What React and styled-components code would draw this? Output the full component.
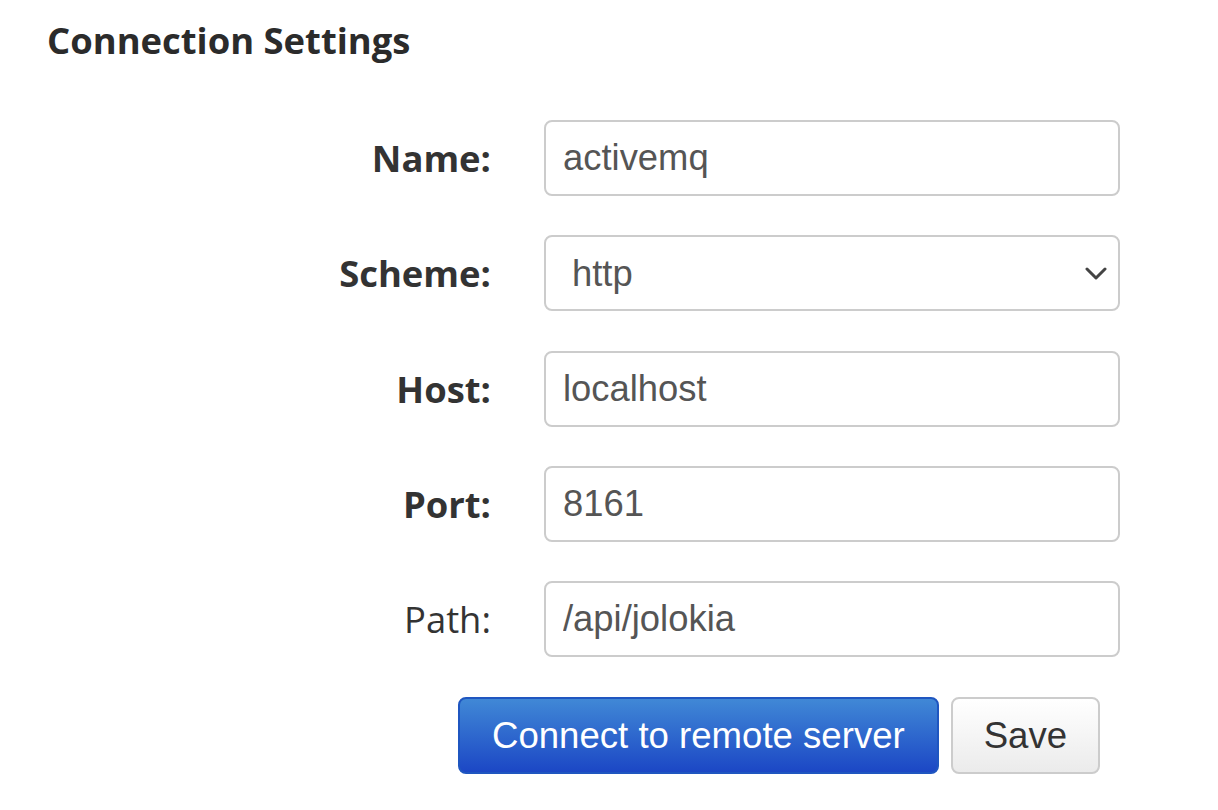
import React from "react";
import styled, { createGlobalStyle } from "styled-components";

const GlobalStyle = createGlobalStyle`
  html, body {
    margin: 0;
    padding: 0;
    background: #ffffff;
  }
  body {
    font-family: "Open Sans", "Liberation Sans", sans-serif;
  }
`;

const Page = styled.div`
  padding: 17px 0 0 47px;
  width: 1218px;
  box-sizing: border-box;
`;

const Title = styled.h2`
  margin: 0 0 57px;
  font-family: "Open Sans", sans-serif;
  font-weight: 700;
  font-size: 36.4px;
  line-height: 46px;
  color: #2b2b2b;
`;

const Form = styled.form`
  display: grid;
  grid-template-columns: 444px 576px;
  column-gap: 53px;
  row-gap: 39.3px;
  align-items: center;
`;

const Label = styled.label`
  text-align: right;
  font-family: "Open Sans", sans-serif;
  font-size: 36.4px;
  font-weight: ${(p) => (p.$required ? 700 : 400)};
  color: #333333;
`;

const Field = styled.div`
  position: relative;
  height: 76px;
`;

const Input = styled.input`
  width: 100%;
  height: 76px;
  box-sizing: border-box;
  border: 2px solid #cccccc;
  border-radius: 8px;
  padding: 0 17px;
  font-family: "Liberation Sans", Arial, sans-serif;
  font-size: 36.4px;
  color: #555555;
  background: #ffffff;
  outline: none;
`;

const Select = styled.select`
  width: 100%;
  height: 76px;
  box-sizing: border-box;
  border: 2px solid #cccccc;
  border-radius: 8px;
  padding: 0 26px;
  font-family: "Liberation Sans", Arial, sans-serif;
  font-size: 36.4px;
  color: #555555;
  background: #ffffff;
  appearance: none;
  outline: none;
`;

const Chevron = styled.svg`
  position: absolute;
  right: 13px;
  top: 32px;
  width: 22px;
  height: 14px;
  pointer-events: none;
`;

const Actions = styled.div`
  display: flex;
  gap: 12px;
  margin: 40px 0 0 411px;
`;

const Button = styled.button`
  height: 77px;
  padding: 0 ${(p) => (p.$primary ? "32px" : "31px")};
  border-radius: 8px;
  font-family: "Liberation Sans", Arial, sans-serif;
  font-size: 36.6px;
  cursor: pointer;
  border: 2px solid ${(p) => (p.$primary ? "#1f56c0" : "#cccccc")};
  color: ${(p) => (p.$primary ? "#ffffff" : "#333333")};
  background: ${(p) =>
    p.$primary
      ? "linear-gradient(to bottom, #4088d6 0%, #1c47c5 100%)"
      : "linear-gradient(to bottom, #ffffff 0%, #ebebeb 100%)"};
`;

const fields = [
  { label: "Name:", value: "activemq", required: true },
  { label: "Scheme:", value: "http", required: true, select: true },
  { label: "Host:", value: "localhost", required: true },
  { label: "Port:", value: "8161", required: true },
  { label: "Path:", value: "/api/jolokia", required: false },
];

export default function App() {
  return (
    <Page>
      <GlobalStyle />
      <Title>Connection Settings</Title>
      <Form onSubmit={(e) => e.preventDefault()}>
        {fields.map((f) => (
          <React.Fragment key={f.label}>
            <Label $required={f.required}>{f.label}</Label>
            <Field>
              {f.select ? (
                <>
                  <Select defaultValue={f.value}>
                    <option value="http">http</option>
                    <option value="https">https</option>
                  </Select>
                  <Chevron viewBox="0 0 22 14">
                    <path
                      d="M2 2 L11 11 L20 2"
                      fill="none"
                      stroke="#444"
                      strokeWidth="3"
                      strokeLinecap="round"
                      strokeLinejoin="round"
                    />
                  </Chevron>
                </>
              ) : (
                <Input defaultValue={f.value} />
              )}
            </Field>
          </React.Fragment>
        ))}
      </Form>
      <Actions>
        <Button type="button" $primary>
          Connect to remote server
        </Button>
        <Button type="button">Save</Button>
      </Actions>
    </Page>
  );
}
